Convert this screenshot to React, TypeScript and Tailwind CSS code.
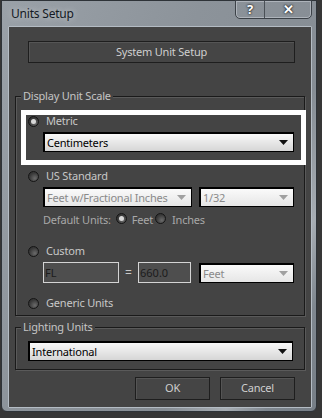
import React from "react";

const font = { fontFamily: '"Noto Sans", "Open Sans", sans-serif' };

function Radio({ checked }: { checked?: boolean }) {
  return (
    <span className="relative inline-block w-[11px] h-[11px] rounded-full border border-[#151515] bg-[radial-gradient(circle_at_65%_70%,#6a6a6a_0%,#3a3a3a_60%,#2a2a2a_100%)] shrink-0">
      {checked && (
        <span className="absolute left-[2px] top-[2px] w-[5px] h-[5px] rounded-full bg-[#d8d8d8]" />
      )}
    </span>
  );
}

function Arrow({ color }: { color: string }) {
  return (
    <svg width="9" height="5" viewBox="0 0 9 5" className="shrink-0">
      <polygon points="0,0 9,0 4.5,5" fill={color} />
    </svg>
  );
}

function Dropdown({
  text,
  disabled,
  className,
}: {
  text: string;
  disabled?: boolean;
  className: string;
}) {
  return (
    <div
      className={
        "flex items-center justify-between whitespace-nowrap border border-black border-t-2 border-l-2 pl-[2px] pr-[5px] text-[11px] tracking-[-0.2px] leading-none " +
        (disabled
          ? "bg-[linear-gradient(#fafafa,#e6e6e6)] text-[#8a8a8a] "
          : "bg-[linear-gradient(#f8f8f8,#d6d6d6)] text-black ") +
        className
      }
    >
      <span>{text}</span>
      <Arrow color={disabled ? "#a0a0a0" : "#111"} />
    </div>
  );
}

function Btn({ text, className }: { text: string; className: string }) {
  return (
    <div
      className={
        "flex items-center justify-center whitespace-nowrap border border-[#1e1e1e] bg-[#454545] text-[11px] tracking-[-0.2px] text-[#cfcfcf] shadow-[inset_1px_1px_0_#555] " +
        className
      }
    >
      {text}
    </div>
  );
}

function Group({
  label,
  className,
  children,
}: {
  label: string;
  className: string;
  children: React.ReactNode;
}) {
  return (
    <div
      className={
        "relative border border-[#1a1a1a] shadow-[1px_1px_0_#5a5a5a,inset_1px_1px_0_#5a5a5a] " + className
      }
    >
      <span className="absolute -top-[9px] left-[5px] bg-[#444444] px-[2px] text-[11px] tracking-[-0.2px] leading-[16px] text-[#c4c4c4] whitespace-nowrap">
        {label}
      </span>
      {children}
    </div>
  );
}

const label = "text-[11px] tracking-[-0.2px] text-[#c8c8c8]";

export default function App() {
  return (
    <div className="w-[322px] h-[418px] bg-[#363636] relative overflow-hidden" style={font}>
      {/* window frame */}
      <div className="absolute left-[1px] top-0 w-[316px] h-[412px] rounded-b-[6px] border border-[#2e3338] bg-[linear-gradient(115deg,#9aa1a8_0%,#8c939a_40%,#868d94_70%,#a7adb3_82%,#7f878f_90%,#767e86_100%)]">
        {/* title */}
        <div className="absolute left-[9px] top-[4px] text-[12px] tracking-[-0.2px] leading-[18px] text-[#141a24] [text-shadow:0_0_6px_rgba(255,255,255,0.6)]">
          Units Setup
        </div>
        {/* caption buttons */}
        <div className="absolute left-[233px] -top-[1px] flex h-[19px] rounded-b-[5px] border border-[#3c4248] shadow-[inset_0_0_0_1px_rgba(220,225,230,0.45)] overflow-hidden">
          <div className="w-[29px] flex items-center justify-center border-r border-[#4a5056] text-white font-bold text-[13px] leading-none [text-shadow:0_0_2px_#222,0_0_2px_#222]">
            ?
          </div>
          <div className="w-[46px] flex items-center justify-center text-white font-bold text-[13px] leading-none [text-shadow:0_0_2px_#222,0_0_2px_#222]">
            ✕
          </div>
        </div>
        {/* client area */}
        <div className="absolute left-[6px] top-[25px] w-[304px] h-[382px] border border-[#b4bcc4] rounded-[1px] bg-[#444444] flex flex-col">
          <Btn text="System Unit Setup" className="ml-[19px] mt-[14px] w-[267px] h-[22px]" />

          <Group label="Display Unit Scale" className="ml-[6px] mt-[33px] w-[290px] h-[220px]">
            <div className="flex flex-col pl-[12px]">
              <div className={"mt-[17px] h-[14px] flex items-center gap-[7px] " + label}>
                <Radio checked />
                <span>Metric</span>
              </div>
              <Dropdown text="Centimeters" className="ml-[15px] mt-[4px] w-[251px] h-[20px]" />

              <div className={"mt-[17px] h-[14px] flex items-center gap-[7px] " + label}>
                <Radio />
                <span>US Standard</span>
              </div>
              <div className="mt-[4px] ml-[15px] flex gap-[7px]">
                <Dropdown text="Feet w/Fractional Inches" disabled className="w-[149px] h-[20px]" />
                <Dropdown text="1/32" disabled className="w-[95px] h-[20px]" />
              </div>
              <div className="mt-[6px] ml-[15px] h-[14px] flex items-center whitespace-nowrap text-[11px] tracking-[-0.2px] text-[#a8a8a8]">
                <span>Default Units:</span>
                <span className="ml-[5px]"><Radio checked /></span>
                <span className="ml-[5px]">Feet</span>
                <span className="ml-[2px]"><Radio /></span>
                <span className="ml-[6px]">Inches</span>
              </div>

              <div className={"mt-[17px] h-[14px] flex items-center gap-[7px] " + label}>
                <Radio />
                <span>Custom</span>
              </div>
              <div className="mt-[4px] ml-[15px] flex items-center h-[21px]">
                <div className="w-[76px] h-[21px] border border-[#d4d4d4] bg-[#4e4e4e] text-[11px] text-[#1c1c1c] leading-[19px] pl-[1px]">
                  FL
                </div>
                <span className="w-[19px] text-center text-[12px] text-[#c8c8c8]">=</span>
                <div className="w-[53px] h-[21px] border border-[#d4d4d4] bg-[#4e4e4e] text-[11px] text-[#1c1c1c] leading-[19px] pl-[1px]">
                  660.0
                </div>
                <Dropdown text="Feet" disabled className="ml-[8px] w-[95px] h-[20px]" />
              </div>

              <div className={"mt-[13px] h-[14px] flex items-center gap-[7px] " + label}>
                <Radio />
                <span>Generic Units</span>
              </div>
            </div>
          </Group>

          <Group label="Lighting Units" className="ml-[6px] mt-[11px] w-[290px] h-[43px]">
            <Dropdown text="International" className="ml-[12px] mt-[13px] w-[265px] h-[20px]" />
          </Group>

          <div className="mt-[7px] flex gap-[10px] ml-[126px]">
            <Btn text="OK" className="w-[75px] h-[23px]" />
            <Btn text="Cancel" className="w-[75px] h-[23px]" />
          </div>
        </div>
      </div>
      {/* highlight annotation */}
      <div className="absolute left-[21px] top-[110px] w-[285px] h-[55px] border-[5px] border-white pointer-events-none" />
    </div>
  );
}
